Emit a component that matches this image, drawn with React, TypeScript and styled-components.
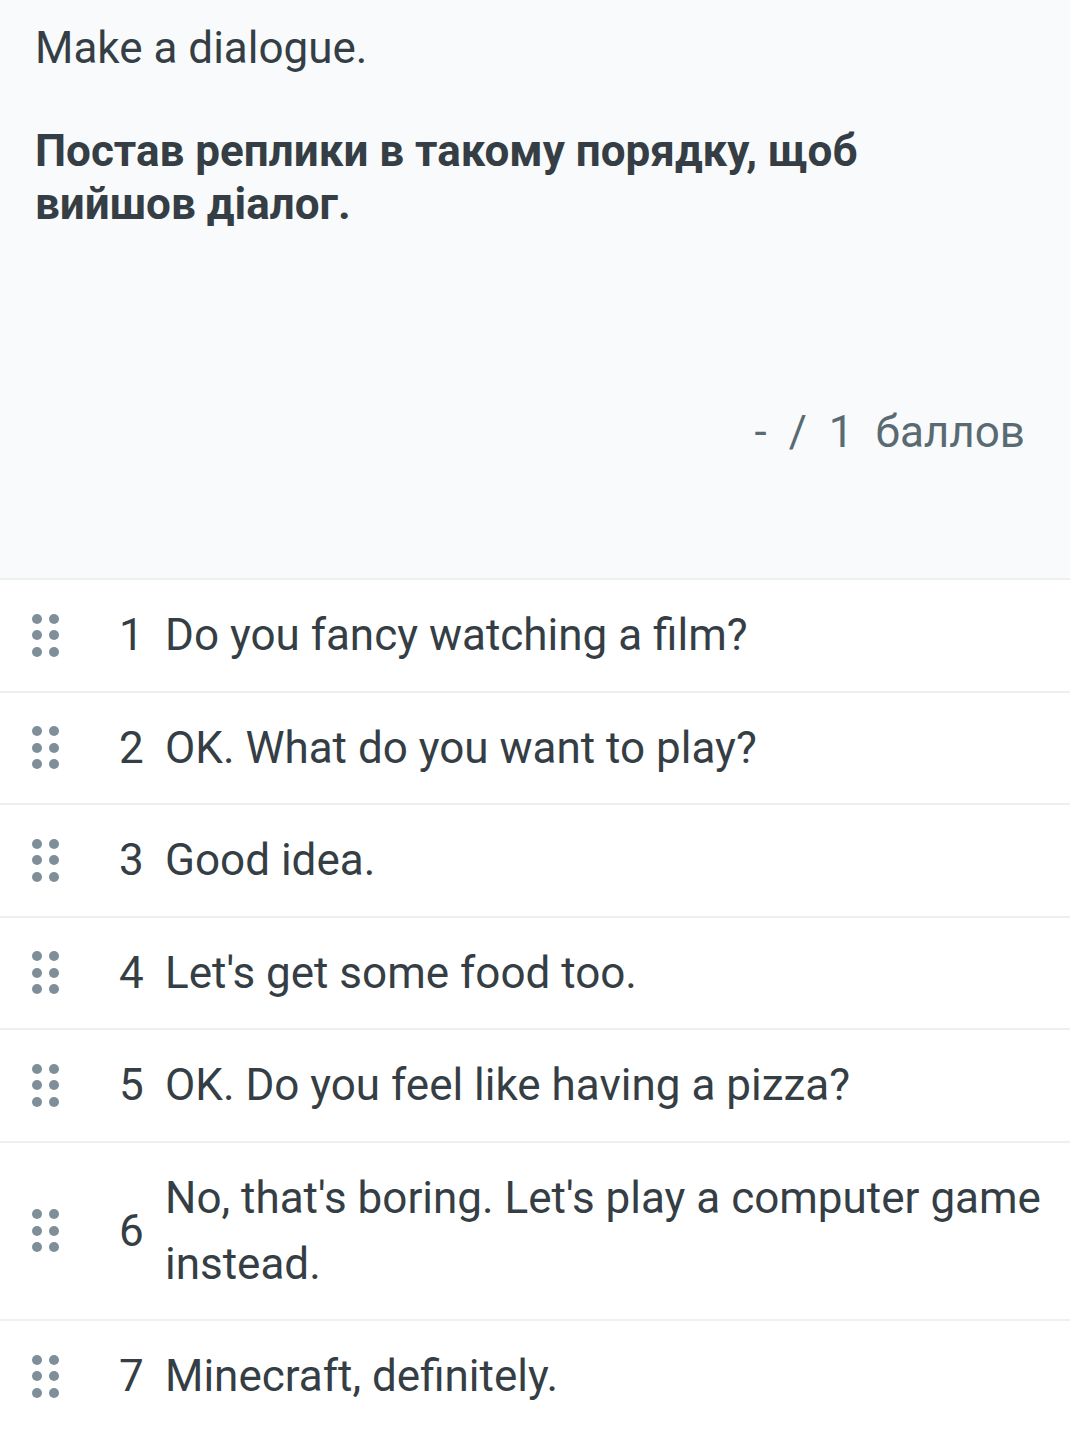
import React from "react";
import styled, { createGlobalStyle } from "styled-components";

const Global = createGlobalStyle`
  html, body { margin: 0; padding: 0; background: #ffffff; }
  body { font-family: Roboto, "Noto Sans", "Liberation Sans", sans-serif; color: #343e44; }
`;

const Page = styled.div`
  width: 1070px;
  min-height: 1430px;
  background: #ffffff;
`;

const Header = styled.header`
  background: #f8fafb;
  padding: 18px 45px 0 35px;
  height: 560px;
  display: flex;
  flex-direction: column;
`;

const Title = styled.p`
  margin: 0;
  font-size: 44px;
  line-height: 60px;
  font-weight: 400;
`;

const Instruction = styled.p`
  margin: 47px 0 0;
  font-size: 44px;
  line-height: 53px;
  font-weight: 700;
  max-width: 880px;
`;

const Points = styled.div`
  margin-top: 171px;
  align-self: flex-end;
  display: flex;
  gap: 22px;
  font-size: 44px;
  line-height: 60px;
  color: #5a6a72;
`;

const List = styled.ul`
  list-style: none;
  margin: 0;
  padding: 0;
`;

const Row = styled.li`
  display: flex;
  align-items: center;
  border-top: 2px solid #edf0f0;
  padding: 22.25px 25px 22.25px 32px;
  background: #ffffff;
`;

const Handle = styled.div`
  display: grid;
  grid-template-columns: repeat(2, 10px);
  grid-auto-rows: 10px;
  column-gap: 7px;
  row-gap: 6.5px;
  width: 27px;
  flex-shrink: 0;
`;

const Dot = styled.span`
  width: 10px;
  height: 10px;
  border-radius: 50%;
  background: #7f8f99;
`;

const Num = styled.span`
  width: 35px;
  margin-left: 60px;
  flex-shrink: 0;
  font-size: 44px;
  line-height: 66px;
`;

const Text = styled.span`
  font-size: 44px;
  line-height: 66px;
  margin-left: 11px;
`;

const items = [
  "Do you fancy watching a film?",
  "OK. What do you want to play?",
  "Good idea.",
  "Let's get some food too.",
  "OK. Do you feel like having a pizza?",
  "No, that's boring. Let's play a computer game instead.",
  "Minecraft, definitely.",
];

export default function App() {
  return (
    <Page>
      <Global />
      <Header>
        <Title>Make a dialogue.</Title>
        <Instruction>Постав реплики в такому порядку, щоб вийшов діалог.</Instruction>
        <Points>
          <span>-</span>
          <span>/</span>
          <span>1</span>
          <span>баллов</span>
        </Points>
      </Header>
      <List>
        {items.map((t, i) => (
          <Row key={i}>
            <Handle>
              {Array.from({ length: 6 }).map((_, j) => (
                <Dot key={j} />
              ))}
            </Handle>
            <Num>{i + 1}</Num>
            <Text>{t}</Text>
          </Row>
        ))}
      </List>
    </Page>
  );
}
